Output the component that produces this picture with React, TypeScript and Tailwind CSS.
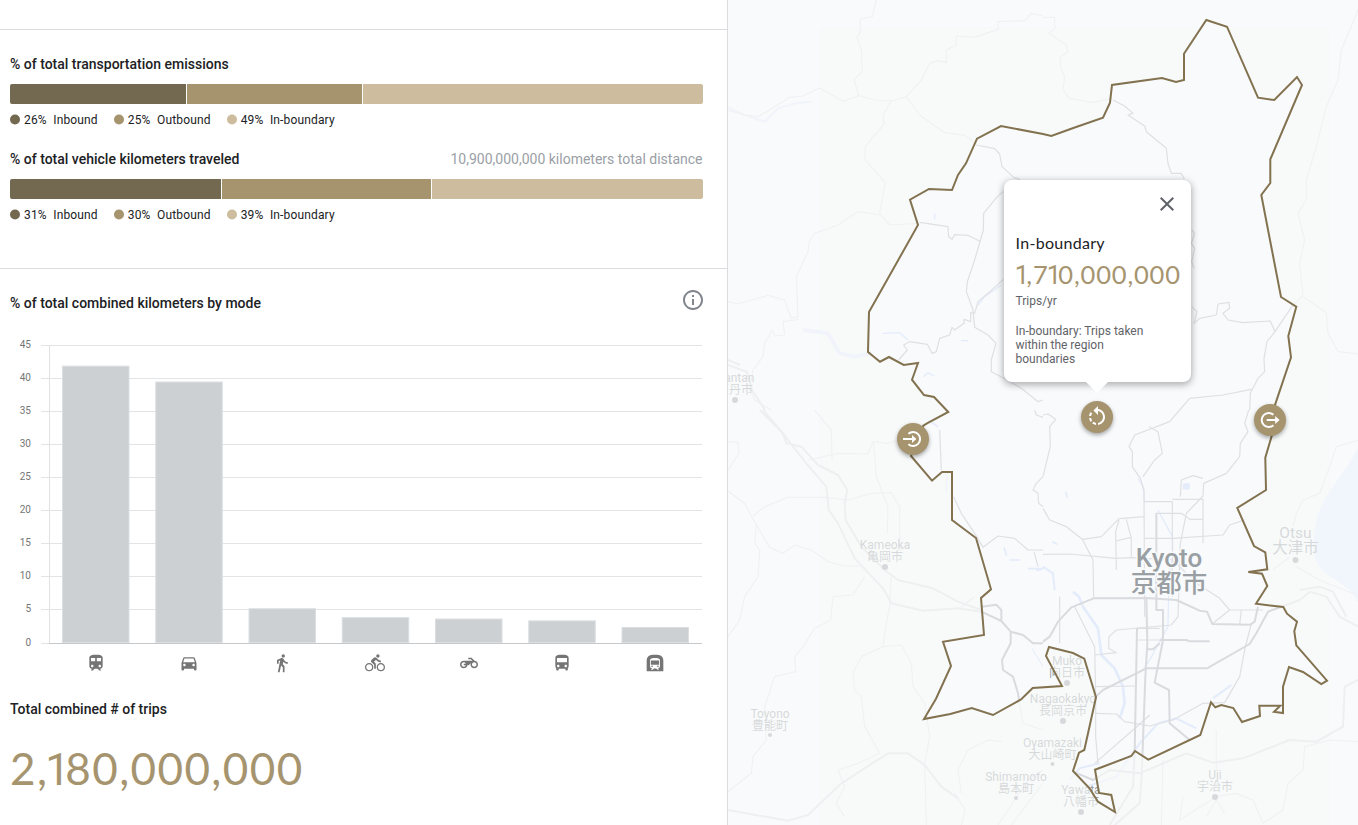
import React from "react";
import {
  MdClose,
  MdDirectionsBike,
  MdDirectionsBus,
  MdDirectionsCar,
  MdDirectionsWalk,
  MdInfoOutline,
  MdRotateLeft,
  MdSubway,
  MdTrain,
} from "react-icons/md";

type Share = { pct: string; label: string; dot: string };

function Legend({ items }: { items: Share[] }) {
  return (
    <div className="mt-2 flex h-4 items-center gap-4 text-[12px] leading-4 tracking-[0.15px] text-[#202124]">
      {items.map((it) => (
        <div key={it.label} className="flex items-center">
          <span className={"mr-1 h-2.5 w-2.5 -translate-y-[0.5px] rounded-full " + it.dot} />
          <span className="w-[29.25px]">{it.pct}</span>
          <span>{it.label}</span>
        </div>
      ))}
    </div>
  );
}

function shares(a: string, b: string, c: string): Share[] {
  return [
    { pct: a, label: "Inbound", dot: "bg-[#736951]" },
    { pct: b, label: "Outbound", dot: "bg-[#a6946f]" },
    { pct: c, label: "In-boundary", dot: "bg-[#cdbd9e]" },
  ];
}

/* Wide round figures with a narrow, foot-less numeral one. */
function Figure({ value }: { value: string }) {
  return (
    <span className="font-['Lato',sans-serif] tracking-[0.032em]">
      {value.split("").map((ch, i) =>
        ch === "1" ? (
          <span key={i} className="-ml-[0.07em] -mr-[0.14em] font-['Roboto',sans-serif]">
            1
          </span>
        ) : (
          ch
        ),
      )}
    </span>
  );
}

function Motorcycle() {
  return (
    <svg width="18" height="18" viewBox="0 0 24 24" fill="currentColor">
      <path d="M19.44 9.03L15.41 5H11v2h3.59l2 2H5c-2.8 0-5 2.2-5 5s2.2 5 5 5c2.46 0 4.45-1.69 4.9-4h1.65l2.77-2.77c-.21.54-.32 1.14-.32 1.77 0 2.8 2.2 5 5 5s5-2.2 5-5c0-2.65-1.97-4.77-4.56-4.97zM7.82 15C7.4 16.15 6.28 17 5 17c-1.63 0-3-1.37-3-3s1.37-3 3-3c1.28 0 2.4.85 2.82 2H5v2h2.82zM19 17c-1.66 0-3-1.34-3-3s1.34-3 3-3 3 1.34 3 3-1.34 3-3 3z" />
    </svg>
  );
}

const modes = [
  { v: 41.9, icon: <MdTrain size={20} /> },
  { v: 39.5, icon: <MdDirectionsCar size={20} /> },
  { v: 5.25, icon: <MdDirectionsWalk size={20} /> },
  { v: 3.9, icon: <MdDirectionsBike size={20} /> },
  { v: 3.7, icon: <Motorcycle /> },
  { v: 3.42, icon: <MdDirectionsBus size={20} /> },
  { v: 2.42, icon: <MdSubway size={20} /> },
];

const ticks = [45, 40, 35, 30, 25, 20, 15, 10, 5, 0];

function Chart() {
  const y = (v: number) => 303 - v * 6.62;
  const line = (v: number) => (v === 0 ? 303 : 269 - (v - 5) * 6.6);
  return (
    <svg width="727" height="312" viewBox="0 0 727 312" className="block">
      {ticks.map((t) => (
        <g key={t}>
          <rect x="41" y={line(t)} width="661" height="1" fill="#e3e4e6" />
          <text x="31" y={line(t) + 3} textAnchor="end" fontSize="10" className="font-['Roboto',sans-serif]" fill="#757575">
            {t}
          </text>
        </g>
      ))}
      <rect x="49" y="5" width="1" height="298" fill="#dfe1e3" />
      {modes.map((m, i) => (
        <rect
          key={i}
          x={62.5 + i * 93.25}
          y={y(m.v) + 0.5}
          width="66.5"
          height={302 - y(m.v)}
          fill="#ccd0d3"
          stroke="#dcdfe1"
          strokeWidth="1"
        />
      ))}
      <rect x="49" y="303" width="653" height="1" fill="#c6c9cb" />
    </svg>
  );
}

const region =
  "M1206.3 20L1227 26.7L1258 97.7L1274.3 100L1297 77L1302 85L1270.3 159.3V183L1261.3 195L1281 297L1296.3 306.7L1288.3 336L1291 357.3L1275 405L1271.7 436L1265.3 457.7L1266 490L1237.3 508L1254 546L1265.3 552.3L1267.3 569.3L1248.3 572L1262 573.7L1267.3 586L1256 603.7L1283.3 607L1287 613.7L1297 621.7L1294.3 631.3L1296.3 645.3L1327 680.7L1321.3 684L1303 672L1289 667L1283 686.7V713L1274 711.7L1280.3 705.7H1259.3L1260 716L1242 722L1233.3 708L1221.3 705L1215.3 707.3L1211 702.3L1200.3 735L1148.3 759.7L1135 751L1131.3 756L1095 769.7L1099 793L1111.3 795L1115 812L1098 801.7L1089.3 788L1073 771L1079 752.7L1084.3 750L1096 697.3L1084.3 658.7L1073 653L1049 647L1046 656L1062 686L1032.7 688L1021.3 699.3L993 715L971.7 708L950.3 714L924 719L936 698.7L951 666L943 641.7L984 635L981 598L991 589.3L976 538L952 520V472H942L932 480.7L911 456L923.3 425.7L927 423.3L948.3 412L934 397L924 395L912 379.7L918 363L903.7 365L889 357L880 361.7L868 352L869 312L918 225L910 199.7L929 189L952 190L958 175L966 163.3L977 138.7L1001 126L1043 134L1051.3 136L1074 127.7L1103 117.7L1110 102.7L1112 85L1162 78L1176 82L1184 80V53.7Z";

type Place = { x: number; y: number; en: string; ja: string; size?: number; ja2?: number; dot?: number };

const places: Place[] = [
  { x: 885, y: 549, en: "Kameoka", ja: "亀岡市", dot: 567 },
  { x: 770, y: 718, en: "Toyono", ja: "豊能町", dot: 735 },
  { x: 1016, y: 781, en: "Shimamoto", ja: "島本町", dot: 798 },
  { x: 1052.5, y: 747, en: "Oyamazaki", ja: "大山崎町", dot: 764 },
  { x: 1063, y: 703, en: "Nagaokakyo", ja: "長岡京市", dot: 721 },
  { x: 1067, y: 665, en: "Muko", ja: "向日市", dot: 683 },
  { x: 1081, y: 794, en: "Yawata", ja: "八幡市", dot: 812 },
  { x: 1215, y: 779, en: "Uji", ja: "宇治市", dot: 797 },
  { x: 735, y: 382, en: "Nantan", ja: "南丹市", dot: 400 },
  { x: 1295.5, y: 537.5, en: "Otsu", ja: "大津市", size: 15.5, ja2: 15.5, dot: 560 },
];

function MapCanvas() {
  return (
    <svg width="630" height="825" viewBox="728 0 630 825" className="block bg-[#f8fafc]" fill="none" strokeLinejoin="round">
      <path d="M819 27H1330V825H819Z" fill="#f7faf8" />
      <path d={region} fill="#f8fafc" />
      <path d="M1358 448C1345 475 1322 494 1316 522C1312 545 1312 560 1323 571C1336 582 1350 586 1358 602Z" fill="#e4edff" />

      {/* rivers and ponds */}
      <g stroke="#e4ecfb">
        <g transform="translate(1043 410) scale(0.33333)" strokeWidth="5">
          <path d="M90 545L108 560L120 590L165 655L175 735L215 775L240 830L245 880L230 925" strokeWidth="8" />
          <path d="M285 205L300 230L305 275M345 300L388 380L390 440L378 500L375 650L320 750L300 780" strokeWidth="4" />
          <path d="M0 470L30 490L35 540M80 1110L110 1075L170 1060M345 940L400 925L460 955M510 865L565 825" strokeWidth="6" />
          <path d="M90 1085L130 1130L220 1100L290 1000L345 940" strokeWidth="6" />
          <path d="M422 222h16v14h-16zM68 245l5 18M28 395l15 8" fill="#e4ecfb" strokeWidth="5" />
        </g>
        <g transform="translate(728 410) scale(0.33333)" strokeWidth="5">
          <path d="M828 412l8 25M845 450h33M900 476h45l-20 6M657 190L655 250M600 30l30 20" />
          <path d="M912 715L945 770" strokeWidth="3" />
        </g>
        <g transform="translate(728 0) scale(0.33333)" strokeWidth="4">
          <path d="M225 990L300 1000L335 1060L380 1070L430 1060" strokeWidth="12" />
          <path d="M0 322L50 345L110 365L150 325L200 310L250 305" strokeWidth="7" />
          <path d="M465 1000L515 998L540 1020M750 915L770 890L820 855M700 1022h20M586 1130L600 1118L618 1128M620 640v18" />
        </g>
      </g>

      {/* local roads */}
      <g stroke="#dfe0e4">
        <g transform="translate(728 0) scale(0.33333)" strokeWidth="3.6">
          <path d="M445 0L433 50L397 57V95L387 112L400 150L403 215L378 238L392 287L440 300L490 303L535 290L575 345L650 398L710 406L745 432" />
          <path d="M535 290L580 240L605 190L630 182L655 188V150L685 135V108L740 112L810 88V65L890 62L910 40L945 48" />
          <path d="M0 330L50 345L90 350L125 330L185 292L225 288L275 264L345 304L390 288M490 303L465 345L468 372L412 440L410 478L472 548L455 640L485 675L570 670" />
          <path d="M455 645L390 635L330 675L260 700L245 720L240 755L205 830L210 950L190 955L170 900L120 886L30 912L0 905" />
          <path d="M212 958L165 965L170 1005L140 1008L133 990L110 1030L105 1070L75 1110L65 1165L80 1200L130 1230" />
          <path d="M745 435L800 446L815 462L822 500L858 533L876 538" />
          <path d="M825 575L806 592L767 640L766 690L740 780L718 845L715 875L735 930L740 982L780 1005L804 1030L790 1080V1115L828 1135L880 1165L930 1205L945 1200" />
          <path d="M575 667L660 680L662 710L672 718L680 704L720 706L758 725" />
          <path d="M826 838L780 880L750 905L740 940L728 938V965L708 958V970L680 990L672 982L665 1005L635 1015L625 1055L612 1060L598 1033L545 1025L527 1035L538 1050L512 1080" />
        </g>
        <g transform="translate(1043 0) scale(0.33333)" strokeWidth="3.6">
          <path d="M210 300L245 318L270 340L255 345L305 378L310 395L370 445L375 490L385 520L415 520L424 538" />
          <path d="M446 690L455 700L445 730L455 745L446 785L453 805M446 920L462 935L453 970L470 955L520 945L525 912L558 907L560 925L540 940L555 960L600 968L682 963L696 995" />
          <path d="M745 922L696 995L672 1025L663 1075L665 1115L645 1135L622 1180L620 1230M410 1230L440 1195L540 1185L625 1168" />
          <path d="M0 52H35V85L18 100L70 135L75 155L52 170V200L65 230L60 270L80 295L150 308L205 295" />
          <path d="M945 30L895 150L885 240L850 320L820 440L790 540V600L765 640L785 720L770 790L780 885L745 922M780 890L850 938L855 1000L885 1055L945 1062" />
        </g>
        <g transform="translate(1043 410) scale(0.33333)" strokeWidth="3.6">
          <path d="M0 15L15 12L38 28L20 50L22 110L0 200M0 295L20 330L70 350L118 388L150 450L152 562" />
          <path d="M617 0L605 40L615 65L592 100L590 140L550 190L482 220L480 258L430 310L412 400L405 620L385 645L220 660L198 680L197 715L220 728L155 735" />
          <path d="M410 0L380 35L275 75L258 110L268 125V170L292 205L303 240L305 620M318 50L345 65L358 130L335 150L300 200" />
          <path d="M303 275H388V560M388 268H480V400M412 260L415 210L450 197L480 205M338 310H415L440 328H478M303 320L228 326L175 380L118 388M228 330L218 365L220 480M250 328L265 385V440M218 393L265 382M305 385H390L540 375L560 345L610 328" />
          <path d="M0 433L80 432L220 445L265 443L390 450L460 520L530 565L560 600H660M560 600L510 640M595 600L590 645" />
          <path d="M95 590L155 710L158 850V980L165 1060M280 655H350M282 690H350M158 830L280 828M155 910L220 912L245 935L320 948L390 930L480 880L545 878L590 800L605 720L625 640" />
          <path d="M155 1060L270 960L320 915M50 560V700" />
          <path d="M760 310L780 270L830 250L860 170L880 110L945 90M760 310L750 350M760 470L830 510L940 555M690 480L740 440" />
          <path d="M520 960V1080M360 1050L355 1245M520 1170L490 1220M520 1170L545 1210M420 1160L410 1230L520 1160L580 1150L630 1170L660 1240L720 1200L735 1120L780 1080L785 1010L860 990L945 995" />
        </g>
        <g transform="translate(728 410) scale(0.33333)" strokeWidth="3.6">
          <path d="M635 60L640 180M677 260L700 310L740 370L765 412L810 378L860 385L900 420H945M918 425L930 470M945 200L925 220L915 240L930 250L932 280L945 290M920 0L925 15L945 22" />
          <path d="M0 243L50 280L85 345L125 412L165 430L200 405L250 420L300 455L350 468H400M85 345L80 400L95 420L90 500L50 560L35 630L0 680" />
          <path d="M75 318L110 290L180 262L290 262L360 270L430 250L490 248L515 290V420L540 400M240 150L330 130L420 132L435 95L480 100L510 90L580 45M437 100L445 200L480 290L478 370" />
          <path d="M410 500L375 555L315 560L308 630L260 655L225 710L200 740L203 785L140 800L110 890L115 990L75 1040L70 1090L0 1145" />
          <path d="M490 500L485 590L475 640L465 710L400 740L375 790L380 840L400 860L410 950L455 1030L390 1060L330 1080L350 1130L325 1180L350 1220M465 710L520 705L550 760L555 830L590 880L605 980L590 1060L595 1245" />
          <path d="M0 95L30 97L33 130L0 180M260 0L310 60L312 150M945 960L885 940L870 850M700 1150L690 1080L720 1020L780 990L820 995" />
          <path d="M700 1245L712 1200L690 1165L680 1150M850 1245L945 1120M810 1245L900 1110L945 1080M740 560L700 590" />
        </g>
      </g>

      {/* trunk roads */}
      <g stroke="#d9dbdf">
        <g transform="translate(1043 410) scale(0.33333)" strokeWidth="6">
          <path d="M0 695L20 680L45 635L85 592L152 565L310 564L400 570L470 602L492 605L508 642L622 644L635 635L645 590" />
          <path d="M158 860L180 840L310 775H492L620 702L640 670L675 605L770 570L800 545L850 560L890 620L945 650" />
          <path d="M310 565L313 700L307 800L296 1100L290 1180L215 1245M282 655L275 1030L270 1130L200 1245" />
          <path d="M340 310V600H360V690L335 818L378 840L380 940L440 990M350 690L430 690L440 694H500M313 718H330L350 700" />
          <path d="M90 1085L150 1110L200 1080L290 1090L430 1030L510 1058L600 1045L740 990L820 995L900 950L905 830L945 810M770 540L830 530L870 545L910 620" />
        </g>
        <g transform="translate(728 410) scale(0.33333)" strokeWidth="6">
          <path d="M760 605L820 633M760 590L805 584L820 600V633L848 665L885 675L915 700L945 700M848 667V700L822 750L825 780L855 800L870 850L873 868" />
          <path d="M105 0L165 70L175 100L220 110L270 165L330 195L358 240L350 280L353 330L400 410L470 480L510 510L615 535L690 575L760 600" />
          <path d="M95 0L160 65L235 160L295 230L302 300L330 340L380 445L465 535L490 580L585 602L690 595L760 605" />
          <path d="M0 1200L180 1232L240 1215L340 1120L480 1030H540L590 1065L640 1130L690 1165" />
        </g>
        <path d="M728 365L747 372L752 390L765 410M728 360L740 365" strokeWidth="2" />
      </g>

      {/* place names */}
      <g textAnchor="middle" className="font-['Roboto','Noto_Sans_CJK_JP',sans-serif]" fill="#9a9fa3">
        {places.map((p) => (
          <g key={p.en}>
            <text x={p.x} y={p.y} fontSize={p.size ?? 12}>
              {p.en}
            </text>
            <text x={p.x} y={p.y + (p.size ? 15.5 : 12)} fontSize={p.ja2 ?? 12}>
              {p.ja}
            </text>
            <circle cx={p.x} cy={p.dot} r={p.en === "Toyono" || p.en === "Shimamoto" || p.en === "Oyamazaki" ? 2 : 3} />
          </g>
        ))}
      </g>
      <path d={"M728 0H1358V825H728Z" + region} fillRule="evenodd" fill="#f9fbfa" fillOpacity="0.64" />
      <g textAnchor="middle" className="font-['Roboto','Noto_Sans_CJK_JP',sans-serif] font-medium" fill="#999fa3" stroke="#f8fafc" strokeWidth="3" paintOrder="stroke">
        <text x="1169" y="567" fontSize="26">Kyoto</text>
        <text x="1169" y="592" fontSize="25.5">京都市</text>
      </g>
      <path d={region} stroke="#82724f" strokeWidth="2" strokeLinejoin="miter" />
    </svg>
  );
}

const pin = "absolute flex h-8 w-8 items-center justify-center rounded-full bg-[#a6946f] text-white shadow-[0_2px_4px_rgba(0,0,0,0.35)]";

export default function App() {
  return (
    <div className="flex h-[825px] w-[1358px] overflow-hidden bg-white font-['Roboto',sans-serif] text-[#202124]">
      <main className="h-full w-[728px] shrink-0 border-r border-[#dadce0]">
        <div className="h-[30px] border-b border-[#dadce0]" />
        <section className="h-[239px] border-b border-[#dadce0] pl-2.5 pr-6 pt-6">
          <h2 className="text-[14px] font-medium leading-5">% of total transportation emissions</h2>
          <div className="mt-2.5 grid h-5 w-[693px] grid-cols-[176px_175px_340px] gap-px overflow-hidden rounded-[2px]">
            <div className="bg-[#736951]" />
            <div className="bg-[#a6946f]" />
            <div className="bg-[#cdbd9e]" />
          </div>
          <Legend items={shares("26%", "25%", "49%")} />
          <div className="mt-[21px] flex items-center justify-between pr-[0.5px] leading-5">
            <h2 className="text-[14px] font-medium">% of total vehicle kilometers traveled</h2>
            <p className="text-[14px] text-[#9aa0a6]">10,900,000,000 kilometers total distance</p>
          </div>
          <div className="mt-2.5 grid h-5 w-[693px] grid-cols-[211px_209px_271px] gap-px overflow-hidden rounded-[2px]">
            <div className="bg-[#736951]" />
            <div className="bg-[#a6946f]" />
            <div className="bg-[#cdbd9e]" />
          </div>
          <Legend items={shares("31%", "30%", "39%")} />
        </section>
        <section>
          <div className="flex h-[71px] items-start justify-between pl-2.5 pr-[22px] pt-[19px]">
            <h2 className="pt-[5px] text-[14px] font-medium leading-5">% of total combined kilometers by mode</h2>
            <MdInfoOutline size={24} className="text-[#80868b]" />
          </div>
          <Chart />
          <div className="ml-[49px] grid h-[22px] w-[653px] grid-cols-7 items-center justify-items-center text-[#757575]">
            {modes.map((m, i) => (
              <span key={i}>{m.icon}</span>
            ))}
          </div>
        </section>
        <section className="pl-2.5 pt-[25px]">
          <h2 className="text-[14px] font-medium leading-5">Total combined # of trips</h2>
          <p className="mt-[21px] text-[44px] leading-[56px] text-[#a6946f]">
            <Figure value="2,180,000,000" />
          </p>
        </section>
      </main>

      <aside className="relative h-full w-[630px] shrink-0 overflow-hidden">
        <MapCanvas />
        <div className={pin + " left-[169px] top-[423px]"}>
          <svg width="32" height="32" viewBox="-16 -16 32 32" fill="none" stroke="currentColor" strokeWidth="2">
            <path d="M-4.6 -5.2A7 7 0 1 1 -4.6 5.2M-10 0H2" />
            <path d="M-1 -4L3.4 0L-1 4Z" fill="currentColor" stroke="none" />
          </svg>
        </div>
        <div className={pin + " left-[353px] top-[401px]"}>
          <MdRotateLeft size={24} />
        </div>
        <div className={pin + " left-[526px] top-[404px]"}>
          <svg width="32" height="32" viewBox="-16 -16 32 32" fill="none" stroke="currentColor" strokeWidth="2">
            <path d="M3.4 -5.2A7 7 0 1 0 3.4 5.2M-3.3 0H8" />
            <path d="M5.2 -4L9.6 0L5.2 4Z" fill="currentColor" stroke="none" />
          </svg>
        </div>

        <div className="absolute left-[275.5px] top-[180px] h-[202px] w-[187px] rounded-lg bg-white px-3 shadow-[0_2px_7px_1px_rgba(0,0,0,0.3)]">
          <div className="flex justify-end pt-3">
            <MdClose size={24} className="text-[#5f6368]" />
          </div>
          <h3 className="mt-[17px] font-['Lato',sans-serif] text-[16px] leading-5 tracking-[0.3px]">In-boundary</h3>
          <p className="mt-[7px] whitespace-nowrap pl-px text-[25.5px] leading-7 text-[#a6946f]">
            <Figure value="1,710,000,000" />
          </p>
          <p className="mt-1 text-[12px] leading-4 text-[#5f6368]">Trips/yr</p>
          <p className="mt-[15px] w-[140px] text-[12px] leading-[14px] text-[#5f6368]">
            In-boundary: Trips taken within the region boundaries
          </p>
          <svg className="absolute left-[81.5px] top-[202px]" width="24" height="12" viewBox="0 0 24 12">
            <path d="M1 0H23L12 11Z" fill="#fff" />
          </svg>
        </div>
      </aside>
    </div>
  );
}
